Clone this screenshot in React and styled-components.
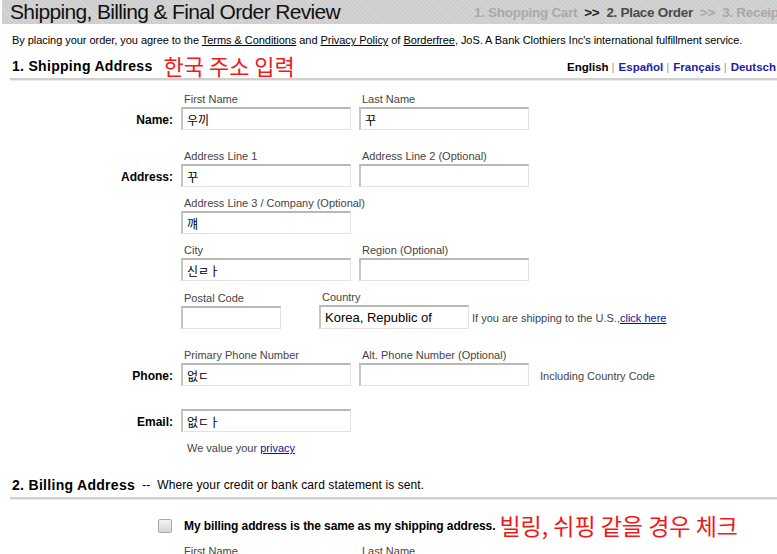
import React from 'react';
import styled, { createGlobalStyle } from 'styled-components';

const Global = createGlobalStyle`
  html, body {
    margin: 0;
    background: #fff;
    overflow: hidden;
  }
  body {
    font-family: "Liberation Sans", Arial, "Noto Sans CJK KR", sans-serif;
    color: #000;
  }
`;

const Page = styled.div`
  width: 820px;
  padding-left: 2px;
`;

const Header = styled.div`
  display: grid;
  grid-template-columns: 472px 1fr;
  align-items: center;
  height: 24px;
  background-color: #cdcdcd;
  background-image: repeating-linear-gradient(
    45deg,
    rgba(255, 255, 255, 0.18) 0px,
    rgba(255, 255, 255, 0.18) 1px,
    transparent 1px,
    transparent 3px
  );
`;

const Title = styled.h1`
  margin: 0;
  padding-left: 8px;
  font-size: 21px;
  letter-spacing: -0.65px;
  font-weight: normal;
  line-height: 24px;
  color: #111;
  white-space: nowrap;
`;

const Steps = styled.div`
  display: flex;
  gap: 7px;
  font-size: 13.5px;
  font-weight: bold;
  letter-spacing: -0.3px;
  white-space: nowrap;
`;

const Step = styled.span`
  color: ${(p) => (p.$active ? '#4a4a4a' : p.$dark ? '#222' : '#a9a9a9')};
`;

const Terms = styled.p`
  margin: 9px 0 0 10px;
  font-size: 11px;
  letter-spacing: -0.05px;
  line-height: 14px;
  a {
    color: #000;
    text-decoration: underline;
  }
`;

const SectionHead = styled.div`
  display: flex;
  align-items: flex-end;
  margin: ${(p) => p.$mt || '8px'} 0 0 8px;
  padding: 0 0 2px 2px;
  border-bottom: 2px solid #cfcfcf;
  box-shadow: 0 1px 0 #ececec;
`;

const SectionTitle = styled.h2`
  margin: 0;
  font-size: 14px;
  letter-spacing: 0.3px;
  font-weight: bold;
  line-height: 20px;
  white-space: nowrap;
`;

const SectionNote = styled.span`
  margin-left: 7px;
  font-size: 12px;
  letter-spacing: 0.1px;
  line-height: 19px;
  white-space: nowrap;
`;

const RedNote = styled.span`
  color: #f01818;
  font-family: "Noto Sans CJK KR", sans-serif;
  font-size: ${(p) => p.$size || '18px'};
  line-height: 1;
  white-space: nowrap;
  margin-left: ${(p) => p.$ml || '10px'};
  padding-bottom: ${(p) => p.$pb || '0px'};
`;

const Langs = styled.div`
  margin-left: auto;
  margin-right: 46px;
  display: flex;
  align-items: center;
  font-size: 11.5px;
  font-weight: bold;
  line-height: 18px;
  white-space: nowrap;
`;

const Lang = styled.a`
  color: ${(p) => (p.$current ? '#000' : '#1c1ca8')};
  text-decoration: none;
  &:not(:first-child)::before {
    content: '|';
    color: #b89090;
    font-weight: normal;
    margin: 0 4px 0 3px;
  }
`;

const Form = styled.div`
  display: flex;
  flex-direction: column;
  gap: 20px;
  padding-top: 13px;
`;

const Block = styled.div`
  display: flex;
  flex-direction: column;
  gap: 10px;
`;

const Row = styled.div`
  display: grid;
  grid-template-columns: 179px 1fr;
  align-items: end;
  margin-top: ${(p) => p.$mt || '0px'};
`;

const RowLabel = styled.div`
  height: 23px;
  padding: 2px 8px 0 0;
  box-sizing: border-box;
  text-align: right;
  font-size: 12px;
  font-weight: bold;
  line-height: 23px;
`;

const Fields = styled.div`
  display: flex;
  align-items: flex-end;
  gap: ${(p) => p.$gap || '8px'};
`;

const Group = styled.div`
  display: flex;
  flex-direction: column;
`;

const Caption = styled.label`
  padding-left: 3px;
  margin-bottom: 2px;
  font-size: 11px;
  line-height: 12px;
  color: #444;
  white-space: nowrap;
`;

const Field = styled.input`
  box-sizing: border-box;
  width: ${(p) => p.$w || 170}px;
  height: ${(p) => p.$h || 23}px;
  margin: 0;
  padding: 0 4px;
  border-style: solid;
  border-width: 2px 1px 1px 2px;
  border-color: #b8b8b8 #e2e2e2 #e2e2e2 #c4c4c4;
  background: #fff;
  font-family: ${(p) =>
    p.$latin ? '"Liberation Sans", Arial, sans-serif' : '"Noto Sans CJK KR", "Liberation Sans", sans-serif'};
  font-size: ${(p) => p.$fs || 12}px;
  color: #000;
  outline: none;
`;

const Aside = styled.span`
  padding: 0 0 ${(p) => p.$pb || '4px'} ${(p) => p.$pl || '3px'};
  font-size: 11px;
  line-height: 14px;
  color: #444;
  white-space: nowrap;
  a {
    color: #10109a;
    text-decoration: underline;
  }
`;

const Privacy = styled.div`
  margin: -10px 0 0 185px;
  font-size: 11px;
  color: #444;
  a {
    color: #10109a;
    text-decoration: underline;
  }
`;

const CheckRow = styled.div`
  display: flex;
  align-items: center;
  margin: 15px 0 0 156px;
`;

const Check = styled.span`
  box-sizing: border-box;
  width: 14px;
  height: 14px;
  border: 1px solid #a8a8a8;
  border-radius: 2px;
  background: linear-gradient(#f4f4f4, #d6d6d6);
`;

const CheckText = styled.span`
  margin-left: 12px;
  font-size: 12px;
  font-weight: bold;
  white-space: nowrap;
  letter-spacing: -0.1px;
`;

const NextCaptions = styled.div`
  display: flex;
  margin: 8px 0 0 182px;
  font-size: 11px;
  color: #444;
  span { width: 178px; }
`;

export default function App() {
  return (
    <Page>
      <Global />
      <Header>
        <Title>Shipping, Billing &amp; Final Order Review</Title>
        <Steps>
          <Step>1. Shopping Cart</Step>
          <Step $dark>&gt;&gt;</Step>
          <Step $active>2. Place Order</Step>
          <Step>&gt;&gt;</Step>
          <Step>3. Receipt</Step>
        </Steps>
      </Header>

      <Terms>
        By placing your order, you agree to the <a href="#">Terms &amp; Conditions</a> and{' '}
        <a href="#">Privacy Policy</a> of <a href="#">Borderfree</a>, JoS. A Bank Clothiers Inc's
        international fulfillment service.
      </Terms>

      <SectionHead $mt="7px">
        <SectionTitle>1. Shipping Address</SectionTitle>
        <RedNote $size="22px" $ml="11px">한국 주소 입력</RedNote>
        <Langs>
          <Lang $current href="#">English</Lang>
          <Lang href="#">Español</Lang>
          <Lang href="#">Français</Lang>
          <Lang href="#">Deutsch</Lang>
        </Langs>
      </SectionHead>

      <Form>
        <Row>
          <RowLabel>Name:</RowLabel>
          <Fields>
            <Group>
              <Caption>First Name</Caption>
              <Field readOnly value="우끼" />
            </Group>
            <Group>
              <Caption>Last Name</Caption>
              <Field readOnly value="꾸" />
            </Group>
          </Fields>
        </Row>

        <Block>
          <Row>
            <RowLabel>Address:</RowLabel>
            <Fields>
              <Group>
                <Caption>Address Line 1</Caption>
                <Field readOnly value="꾸" />
              </Group>
              <Group>
                <Caption>Address Line 2 (Optional)</Caption>
                <Field readOnly value="" />
              </Group>
            </Fields>
          </Row>
          <Row>
            <span />
            <Fields>
              <Group>
                <Caption>Address Line 3 / Company (Optional)</Caption>
                <Field readOnly value="꺠" />
              </Group>
            </Fields>
          </Row>
          <Row>
            <span />
            <Fields>
              <Group>
                <Caption>City</Caption>
                <Field readOnly value="신ㄹㅏ" />
              </Group>
              <Group>
                <Caption>Region (Optional)</Caption>
                <Field readOnly value="" />
              </Group>
            </Fields>
          </Row>
          <Row>
            <span />
            <Fields $gap="38px">
              <Group>
                <Caption>Postal Code</Caption>
                <Field $w={100} readOnly value="" />
              </Group>
              <Fields $gap="0px">
                <Group>
                  <Caption>Country</Caption>
                  <Field $latin $w={150} $h={24} $fs={13} readOnly value="Korea, Republic of" />
                </Group>
                <Aside>
                  If you are shipping to the U.S.,<a href="#">click here</a>
                </Aside>
              </Fields>
            </Fields>
          </Row>
        </Block>

        <Row>
          <RowLabel>Phone:</RowLabel>
          <Fields>
            <Group>
              <Caption>Primary Phone Number</Caption>
              <Field readOnly value="없ㄷ" />
            </Group>
            <Group>
              <Caption>Alt. Phone Number (Optional)</Caption>
              <Field readOnly value="" />
            </Group>
            <Aside $pl="3px" $pb="3px">Including Country Code</Aside>
          </Fields>
        </Row>

        <Row $mt="3px">
          <RowLabel>Email:</RowLabel>
          <Fields>
            <Field readOnly value="없ㄷㅏ" />
          </Fields>
        </Row>
        <Privacy>
          We value your <a href="#">privacy</a>
        </Privacy>
      </Form>

      <SectionHead $mt="21px">
        <SectionTitle>2. Billing Address</SectionTitle>
        <SectionNote>--&nbsp; Where your credit or bank card statement is sent.</SectionNote>
      </SectionHead>

      <CheckRow>
        <Check />
        <CheckText>My billing address is the same as my shipping address.</CheckText>
        <RedNote $size="23px" $ml="4px">빌링, 쉬핑 같을 경우 체크</RedNote>
      </CheckRow>

      <NextCaptions>
        <span>First Name</span>
        <span>Last Name</span>
      </NextCaptions>
    </Page>
  );
}
